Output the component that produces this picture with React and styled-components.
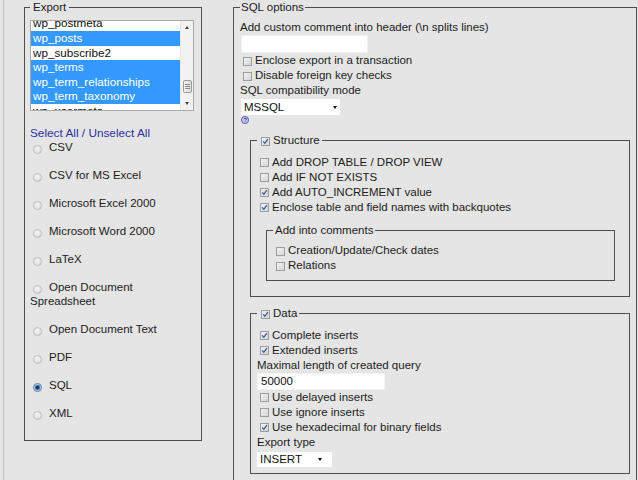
import styled, { createGlobalStyle } from "styled-components";

const tables = [
  { name: "wp_postmeta", selected: false },
  { name: "wp_posts", selected: true },
  { name: "wp_subscribe2", selected: false },
  { name: "wp_terms", selected: true },
  { name: "wp_term_relationships", selected: true },
  { name: "wp_term_taxonomy", selected: true },
  { name: "wp_usermeta", selected: false },
];

const formats = [
  "CSV",
  "CSV for MS Excel",
  "Microsoft Excel 2000",
  "Microsoft Word 2000",
  "LaTeX",
  "Open Document Spreadsheet",
  "Open Document Text",
  "PDF",
  "SQL",
  "XML",
];

const Check = ({ checked }) => (
  <CheckBox>
    {checked && (
      <svg width="7" height="7" viewBox="0 0 7 7">
        <path d="M1.2 3.4 L2.8 5.3 L5.9 1.2" fill="none" stroke="#3556a0" strokeWidth="1.3" />
      </svg>
    )}
  </CheckBox>
);

const CheckRow = ({ checked, children }) => (
  <Row>
    <Check checked={checked} />
    {children}
  </Row>
);

const App = () => {
  return (
    <>
      <GlobalStyle />
      <Page>
        <LeftCell>
          <ExportSet>
            <ExportLegend>Export</ExportLegend>
            <ListBox>
              <ListItems>
                {tables.map((t) => (
                  <ListItem key={t.name} $selected={t.selected}>
                    {t.name}
                  </ListItem>
                ))}
              </ListItems>
              <ScrollBar>
                <ScrollButton>
                  <ArrowUp />
                </ScrollButton>
                <ScrollTrack>
                  <ScrollThumb $offset={46}>
                    <Grip />
                    <Grip />
                    <Grip />
                  </ScrollThumb>
                </ScrollTrack>
                <ScrollButton>
                  <ArrowDown />
                </ScrollButton>
              </ScrollBar>
            </ListBox>
            <LinkRow>
              <span>Select All</span> / <span>Unselect All</span>
            </LinkRow>
            <RadioList>
              {formats.map((f) => (
                <RadioItem key={f}>
                  <Radio $checked={f === "SQL"} />
                  {f}
                </RadioItem>
              ))}
            </RadioList>
          </ExportSet>
        </LeftCell>

        <OptionsSet>
          <OptionsLegend>SQL options</OptionsLegend>
          <Row>Add custom comment into header (\n splits lines)</Row>
          <TextInput type="text" defaultValue="" $width={127} $height={18} $ml={1} />
          <CheckRow>Enclose export in a transaction</CheckRow>
          <CheckRow>Disable foreign key checks</CheckRow>
          <Row>SQL compatibility mode</Row>
          <Select $width={99} $height={16} $ml={1} $mt={1} $arrowGap={3}>
            MSSQL
            <DropArrow />
          </Select>
          <HelpIcon>?</HelpIcon>

          <StructureSet>
            <GroupLegend>
              <Check checked />
              Structure
            </GroupLegend>
            <CheckRow>Add DROP TABLE / DROP VIEW</CheckRow>
            <CheckRow>Add IF NOT EXISTS</CheckRow>
            <CheckRow checked>Add AUTO_INCREMENT value</CheckRow>
            <CheckRow checked>Enclose table and field names with backquotes</CheckRow>
            <CommentsSet>
              <SubLegend>Add into comments</SubLegend>
              <CheckRow>Creation/Update/Check dates</CheckRow>
              <CheckRow>Relations</CheckRow>
            </CommentsSet>
          </StructureSet>

          <DataSet>
            <GroupLegend>
              <Check checked />
              Data
            </GroupLegend>
            <CheckRow checked>Complete inserts</CheckRow>
            <CheckRow checked>Extended inserts</CheckRow>
            <Row>Maximal length of created query</Row>
            <TextInput type="text" defaultValue="50000" $width={128} $height={17} $ml={0} />
            <CheckRow>Use delayed inserts</CheckRow>
            <CheckRow>Use ignore inserts</CheckRow>
            <CheckRow checked>Use hexadecimal for binary fields</CheckRow>
            <Row>Export type</Row>
            <Select $width={75} $height={15} $ml={0} $mt={2} $arrowGap={10}>
              INSERT
              <DropArrow />
            </Select>
          </DataSet>
        </OptionsSet>
      </Page>
    </>
  );
};

export default App;

const GlobalStyle = createGlobalStyle`
  html, body {
    margin: 0;
    padding: 0;
    background: #e5e5e5;
  }

  body {
    font-family: "Liberation Sans", Arial, sans-serif;
    font-size: 11.5px;
    color: #1c1c1c;
  }
`;

const Page = styled.div`
  display: flex;
  align-items: flex-start;
  height: 480px;
  padding-left: 3px;
  box-sizing: border-box;
  overflow: hidden;
`;

const LeftCell = styled.div`
  flex: none;
  width: 209px;
  height: 480px;
  padding-left: 20px;
  border-left: 1px solid #c4c4c4;
`;

const Frame = styled.fieldset`
  box-sizing: border-box;
  min-width: 0;
  margin: 0;
  border: 1px solid #4e4e4e;
`;

const Legend = styled.legend`
  line-height: 14px;
  font-size: 11.5px;
  white-space: nowrap;
`;

const ExportSet = styled(Frame)`
  width: 178px;
  height: 441px;
  padding: 6px 5px 0 5px;
`;

const ExportLegend = styled(Legend)`
  padding: 0 3px;
`;

const ListBox = styled.div`
  display: flex;
  width: 164px;
  height: 91px;
  box-sizing: border-box;
  border: 1px solid #a9a9a9;
  background: #fff;
  overflow: hidden;
`;

const ListItems = styled.div`
  flex: 1;
  overflow: hidden;
`;

const ListItem = styled.div`
  height: 14.6px;
  line-height: 14.6px;
  padding-left: 2px;
  font-size: 11.7px;
  white-space: nowrap;
  background: ${(p) => (p.$selected ? "#3399ff" : "#fff")};
  color: ${(p) => (p.$selected ? "#fff" : "#111")};

  &:first-child {
    margin-top: -4.6px;
  }
`;

const ScrollBar = styled.div`
  flex: none;
  width: 12px;
  display: flex;
  flex-direction: column;
  background: #f2f2f2;
  border-left: 1px solid #e6e6e6;
`;

const ScrollButton = styled.div`
  height: 13px;
  display: flex;
  align-items: center;
  justify-content: center;
`;

const ArrowUp = styled.span`
  width: 0;
  height: 0;
  border-left: 2.5px solid transparent;
  border-right: 2.5px solid transparent;
  border-bottom: 3px solid #444;
`;

const ArrowDown = styled(ArrowUp)`
  border-bottom: 0;
  border-top: 3px solid #444;
`;

const ScrollTrack = styled.div`
  flex: 1;
  display: flex;
  flex-direction: column;
  align-items: center;
`;

const ScrollThumb = styled.div`
  margin-top: ${(p) => p.$offset}px;
  width: 9px;
  height: 13px;
  box-sizing: border-box;
  border: 1px solid #9a9a9a;
  border-radius: 2px;
  background: linear-gradient(90deg, #f4f4f4, #dcdcdc);
  display: flex;
  flex-direction: column;
  align-items: center;
  justify-content: center;
  gap: 1px;
`;

const Grip = styled.span`
  width: 5px;
  height: 1px;
  background: #8a8a8a;
`;

const LinkRow = styled.div`
  margin-top: 14.7px;
  line-height: 14px;
  font-size: 11.8px;
  color: #2f2fa2;

  span {
    cursor: pointer;
  }
`;

const RadioList = styled.div`
  width: 160px;
`;

const RadioItem = styled.div`
  line-height: 14px;
  margin-bottom: 14px;
`;

const Radio = styled.span`
  display: inline-block;
  width: 9px;
  height: 9px;
  box-sizing: border-box;
  margin: 0 7px 0 3px;
  vertical-align: -3px;
  border-radius: 50%;
  border: 1px solid ${(p) => (p.$checked ? "#4e79a6" : "#bdbdbd")};
  background: ${(p) =>
    p.$checked
      ? "radial-gradient(circle, #173f6b 0 1.8px, #6f98c2 2.3px 2.8px, #e9f0f7 3.2px)"
      : "radial-gradient(circle at 40% 35%, #f7f7f7, #d6d6d6)"};
`;

const OptionsSet = styled(Frame)`
  flex: none;
  width: 404px;
  height: 520px;
  padding: 6px 0 0 6px;
`;

const OptionsLegend = styled(Legend)`
  padding: 0 1px;
`;

const Row = styled.div`
  line-height: 15px;
  white-space: nowrap;
`;

const CheckBox = styled.span`
  display: inline-block;
  width: 9px;
  height: 9px;
  box-sizing: border-box;
  margin: 0 3px;
  vertical-align: -1.5px;
  border: 1px solid #9d9d9d;
  background: linear-gradient(135deg, #f3f3f3, #d5d5d5);

  svg {
    display: block;
  }
`;

const TextInput = styled.input`
  display: block;
  width: ${(p) => p.$width}px;
  height: ${(p) => p.$height}px;
  margin: 0 0 0 ${(p) => p.$ml}px;
  padding: 0 3px;
  box-sizing: border-box;
  border: 1px solid #f2f2f2;
  background: #fff;
  font-family: inherit;
  font-size: 11.5px;
  color: #111;
  outline: none;
`;

const Select = styled.div`
  display: flex;
  align-items: center;
  justify-content: space-between;
  width: ${(p) => p.$width}px;
  height: ${(p) => p.$height}px;
  margin: ${(p) => p.$mt}px 0 0 ${(p) => p.$ml}px;
  padding: 0 ${(p) => p.$arrowGap}px 0 3px;
  box-sizing: border-box;
  background: #fff;
  color: #111;
`;

const DropArrow = styled.span`
  width: 0;
  height: 0;
  border-left: 2.5px solid transparent;
  border-right: 2.5px solid transparent;
  border-top: 3px solid #111;
`;

const HelpIcon = styled.span`
  display: block;
  width: 8px;
  height: 8px;
  box-sizing: border-box;
  margin: 1px 0 0 1px;
  border-radius: 50%;
  border: 1px solid #5252a4;
  background: #d4d4f2;
  color: #2c2c8c;
  font-size: 6px;
  font-weight: bold;
  line-height: 6px;
  text-align: center;
`;

const GroupSet = styled(Frame)`
  width: 380px;
  margin-left: 10px;
  padding: 7.5px 0 0 6px;
`;

const StructureSet = styled(GroupSet)`
  margin-top: 9px;
  padding-bottom: 15px;
`;

const DataSet = styled(GroupSet)`
  margin-top: 9px;
  padding-bottom: 6px;
`;

const GroupLegend = styled(Legend)`
  padding: 0 2px 0 4px;

  ${CheckBox} {
    margin-left: 0;
  }
`;

const CommentsSet = styled(Frame)`
  width: 349px;
  margin: 8.5px 0 0 9px;
  padding: 6px 0 7px 6px;
`;

const SubLegend = styled(Legend)`
  padding: 0 2px;
`;
